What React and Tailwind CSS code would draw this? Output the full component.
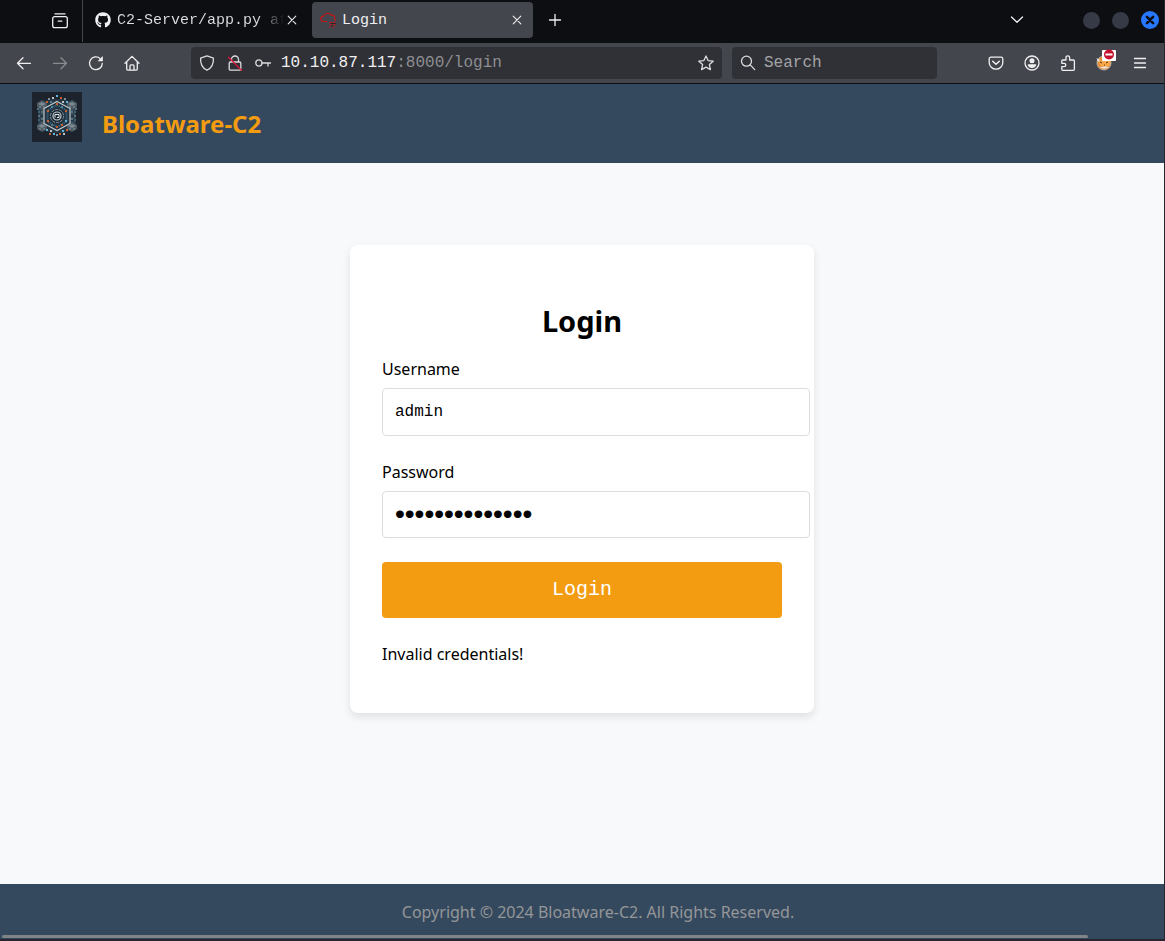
import { FaGithub } from 'react-icons/fa';

const Svg = ({ children, size = 16, className = '' }) => (
  <svg
    width={size}
    height={size}
    viewBox="0 0 16 16"
    fill="none"
    stroke="currentColor"
    strokeWidth="1.3"
    strokeLinecap="round"
    strokeLinejoin="round"
    className={className}
    aria-hidden="true"
  >
    {children}
  </svg>
);

const FirefoxViewIcon = () => (
  <Svg>
    <path d="M3 .9h10M2.600 3.600h10.800a1.900 1.900 0 0 1 1.900 1.900v7.200a1.900 1.900 0 0 1-1.900 1.900H2.600A1.900 1.900 0 0 1 .7 12.700V5.500A1.900 1.900 0 0 1 2.600 3.600zM6.200 8.200h3.600" />
  </Svg>
);

const CloudIcon = () => (
  <Svg className="text-[#c4161c]">
    <path
      d="M7 9.500H3.300A2.700 2.700 0 0 1 .8 6.800 2.600 2.600 0 0 1 3.400 4.300 4.400 4.400 0 0 1 11 3.200a3 3 0 0 1 3.800 3.300c.4.600.5 1.300.4 2"
      strokeWidth="1.200"
    />
    <path d="M9.500 10.500h2M13 10.300h2M10 12.800h1.500M13.500 12.800h2M9.500 15h1M12.500 15h1.500" strokeWidth="1" />
    <path d="M11.500 11.500h1M14 11.500h1M11.500 13.900h1" stroke="#1d1d20" strokeWidth="1" />
  </Svg>
);

const CloseIcon = () => (
  <Svg>
    <path d="M4.200 4.200l7.600 7.600M11.800 4.200l-7.600 7.600" strokeWidth="1.100" />
  </Svg>
);

const PlusIcon = () => (
  <Svg>
    <path d="M8 2.500v11M2.500 8h11" />
  </Svg>
);

const ChevronIcon = () => (
  <Svg>
    <path d="M2.500 5l5.500 5.300L13.500 5" />
  </Svg>
);

const BackIcon = () => (
  <Svg>
    <path d="M14.500 8.300H1.500M7 2.800L1.500 8.300 7 13.800" />
  </Svg>
);

const ForwardIcon = () => (
  <Svg className="text-[#8b8c90]">
    <path d="M1.500 8.300h13M9 2.800l5.500 5.500L9 13.800" />
  </Svg>
);

const ReloadIcon = () => (
  <Svg>
    <path d="M14.300 8.500a6.400 6.400 0 1 1-2.200-5.100" />
    <path d="M14.800 1v5.200H9.600z" fill="currentColor" stroke="none" />
  </Svg>
);

const HomeIcon = () => (
  <Svg>
    <path d="M1 8.300L8 1.400l7 6.900M2.700 7v7.100c0 .6.4 1 1 1h8.600c.6 0 1-.4 1-1V7M6 15v-4.200c0-.5.400-1 1-1h2c.6 0 1 .5 1 1V15" />
  </Svg>
);

const ShieldIcon = () => (
  <Svg>
    <path d="M8 .9l6.400 2.300c.3 4.900-1.100 9.500-6.400 12-5.300-2.500-6.700-7.100-6.400-12z" />
  </Svg>
);

const InsecureLockIcon = () => (
  <Svg>
    <path d="M4.500 7V4.500a3.500 3.500 0 0 1 7 0V7M3.400 7h9.200c.7 0 1.200.5 1.200 1.200v5.700c0 .7-.5 1.200-1.200 1.200H3.400c-.7 0-1.200-.5-1.200-1.200V8.200C2.200 7.500 2.700 7 3.400 7z" />
    <path d="M1.500 2.200l13.200 13.200" stroke="#e2143c" />
  </Svg>
);

const KeyIcon = () => (
  <Svg>
    <circle cx="3.900" cy="8" r="3.100" />
    <path d="M7 8h8.500M13 8v3" />
  </Svg>
);

const StarIcon = () => (
  <Svg>
    <path d="M8 1l2.100 4.600 5.100.6-3.800 3.400 1 5L8 12.100l-4.400 2.500 1-5L.8 6.200l5.100-.6z" />
  </Svg>
);

const SearchIcon = () => (
  <Svg>
    <circle cx="6.500" cy="6.200" r="5" />
    <path d="M10.200 9.900l4.500 4.700" />
  </Svg>
);

const PocketIcon = () => (
  <Svg>
    <path d="M2.900 2.200h10.200c1 0 1.700.7 1.700 1.700v3.500a6.800 6.800 0 0 1-13.600 0V3.900c0-1 .7-1.700 1.700-1.700z" />
    <path d="M4.700 6.300L8 9.300l3.300-3" strokeWidth="1.500" />
  </Svg>
);

const AccountIcon = () => (
  <Svg>
    <circle cx="8" cy="8" r="7" />
    <circle cx="8" cy="5.700" r="2.500" fill="currentColor" stroke="none" />
    <path d="M3.700 9.300h8.600c0 2.100-1.900 3.700-4.300 3.700s-4.300-1.600-4.300-3.700z" fill="currentColor" stroke="none" />
  </Svg>
);

const PuzzleIcon = () => (
  <Svg>
    <path d="M6 5V2.600a1.800 1.800 0 0 1 3.600 0V5h3.800c.6 0 1 .4 1 1v8.300c0 .5-.4 1-1 1H2.800c-.5 0-1-.5-1-1v-2.600h2.300a1.700 1.700 0 0 0 0-3.400H1.800V6c0-.6.5-1 1-1z" />
  </Svg>
);

// fox badge with the "disabled" sign over its corner
const FoxProxyIcon = () => (
  <svg width="22" height="24" viewBox="0 0 22 24" className="mb-2 ml-1" aria-hidden="true">
    <circle cx="9" cy="16" r="7" fill="#e8903a" stroke="#b9b2a8" strokeWidth="1" />
    <path d="M2 12l4 2 3-2 4 1 3 2-2 4-4 1-4-1z" fill="#f7a94b" />
    <path d="M1.500 11l3.500 2-2 2zM5 20c2 2 6 2.500 9 0l-4-.5z" fill="#e9e4dc" />
    <path d="M5 15l2 1M11 16l2-1M9 18h1" stroke="#6b3210" strokeWidth="1" />
    <rect x="7" y="3" width="14" height="11" rx="1" fill="#fff" />
    <circle cx="14" cy="7.500" r="5" fill="#c4122f" />
    <path d="M10.500 6.500h7v2h-7z" fill="#fff" />
  </svg>
);

const MenuIcon = () => (
  <Svg>
    <path d="M2.500 3.500h11M2.500 8h11M2.500 12.500h11" />
  </Svg>
);

const cubes = [[10, 12], [40, 12], [10, 34], [40, 34]];
const sparks = [
  [25, 4, '#5fb4d8'], [21, 6, '#b9c3c9'], [29, 6, '#c65f2c'], [17, 7, '#7d909a'], [33, 7, '#7d909a'],
  [15, 10, '#c65f2c'], [35, 10, '#5fb4d8'], [19, 10, '#4b83a0'], [31, 10, '#b9c3c9'], [25, 12, '#c65f2c'],
  [6, 17, '#5c7480'], [44, 17, '#5c7480'], [7, 20, '#3c6377'], [43, 20, '#3c6377'], [7, 24, '#5c7480'],
  [43, 24, '#5c7480'], [7, 28, '#3c6377'], [43, 28, '#3c6377'], [10, 20, '#5c7480'], [40, 20, '#5c7480'],
  [10, 27, '#5c7480'], [40, 27, '#5c7480'], [16, 19, '#c65f2c'], [34, 19, '#c65f2c'], [16, 29, '#c65f2c'],
  [34, 29, '#5fb4d8'], [25, 35, '#c65f2c'], [20, 15, '#4b83a0'], [30, 15, '#4b83a0'], [20, 33, '#5c7480'],
  [30, 33, '#c65f2c'], [19, 39, '#b9c3c9'], [31, 39, '#5fb4d8'], [15, 38, '#5fb4d8'], [35, 38, '#c65f2c'],
  [22, 42, '#5fb4d8'], [28, 42, '#c65f2c'], [18, 42, '#c65f2c'], [32, 42, '#b9c3c9'], [25, 43, '#7d909a'],
];

const Logo = () => (
  <svg width="50" height="50" viewBox="0 0 50 50" className="shrink-0" role="img" aria-label="Logo">
    <rect width="50" height="50" fill="#1c232c" />
    <path d="M6 11l13-4h12l13 4v26l-13 4H19L6 37z" fill="#263642" />
    <path d="M7 18h6M7 22h6M7 26h6M7 30h6M37 18h6M37 22h6M37 26h6M37 30h6" stroke="#41596a" strokeWidth="1" />
    {cubes.map(([x, y]) => (
      <g key={`${x}-${y}`}>
        <path d={`M${x - 5} ${y - 1}l5-3 5 3v4l-5 3-5-3z`} fill="#4a5963" />
        <path d={`M${x - 4} ${y}l4-2 4 2-4 2z`} fill="#7b8992" />
        <path d={`M${x - 3} ${y + 3}h2M${x + 1} ${y + 3}h2`} stroke="#8d9aa2" strokeWidth="1" />
      </g>
    ))}
    <path d="M25 9.500l13 7v15l-13 7-13-7v-15z" fill="#22323f" stroke="#c3ccd1" strokeWidth="1.200" />
    <path
      d="M25 13l9.500 5.500v11L25 35l-9.500-5.500v-11z"
      fill="none"
      stroke="#41718b"
      strokeWidth="2"
      strokeDasharray="1 1"
    />
    <circle cx="25" cy="24" r="6.500" fill="#1b2833" stroke="#8397a3" strokeWidth="1" strokeDasharray="3 1" />
    <circle cx="25" cy="24" r="4" fill="none" stroke="#c3ccd1" strokeWidth="1.200" />
    <path d="M23 25.500v-3h4v3h-2" fill="none" stroke="#dfe7eb" strokeWidth="1" />
    {sparks.map(([x, y, fill]) => (
      <rect key={`${x}-${y}`} x={x - 1} y={y - 1} width="2" height="2" fill={fill} />
    ))}
  </svg>
);

const ToolbarButton = ({ icon: Icon, label }) => (
  <button type="button" aria-label={label} className="flex h-8 w-9 shrink-0 items-center justify-center">
    <Icon />
  </button>
);

const UrlButton = ({ icon: Icon, label }) => (
  <button type="button" aria-label={label} className="flex h-8 w-7 shrink-0 items-center justify-center">
    <Icon />
  </button>
);

const TabBar = () => (
  <div className="flex h-[43px] items-start bg-[#0d0e12] text-[15px] leading-6 text-[#f0f0f2]">
    <button
      type="button"
      aria-label="Recent browsing"
      className="flex h-[42px] w-[83px] shrink-0 items-center justify-end border-r border-[#45474d] pr-3.5"
    >
      <FirefoxViewIcon />
    </button>
    <div className="flex h-10 w-[229px] shrink-0 items-center pr-3 pl-3">
      <FaGithub size={16} className="shrink-0" />
      <span className="ml-1.5 min-w-0 flex-1 bg-linear-to-r from-[#e0e0e3] from-84% to-transparent bg-clip-text pt-0.5 whitespace-nowrap text-transparent">
        C2-Server/app.py at
      </span>
      <button type="button" aria-label="Close C2-Server tab">
        <CloseIcon />
      </button>
    </div>
    <div className="mt-0.5 flex h-9 w-[221px] shrink-0 items-center rounded bg-[#44464d] px-2">
      <CloudIcon />
      <span className="ml-1.5 flex-1 pt-0.5">Login</span>
      <button type="button" aria-label="Close Login tab">
        <CloseIcon />
      </button>
    </div>
    <button type="button" aria-label="New tab" className="ml-3.5 flex h-10 items-center">
      <PlusIcon />
    </button>
    <button type="button" aria-label="List all tabs" className="ml-auto flex h-10 items-center">
      <ChevronIcon />
    </button>
    <div className="ml-[58px] flex h-10 shrink-0 items-center gap-3 pr-[5px]">
      <button type="button" aria-label="Minimize" className="size-[17px] rounded-full bg-[#363a47]" />
      <button type="button" aria-label="Maximize" className="size-[17px] rounded-full bg-[#363a47]" />
      <button
        type="button"
        aria-label="Close window"
        className="flex size-[18px] items-center justify-center rounded-full bg-[#2777ff] text-[#0d0e12]"
      >
        <Svg size={14}>
          <path d="M4.500 4.500l7 7M11.500 4.500l-7 7" strokeWidth="3" />
        </Svg>
      </button>
    </div>
  </div>
);

const Toolbar = () => (
  <div className="flex h-[41px] items-center border-b border-[#0d0e12] bg-[#44464d] px-1.5 text-[#f0f0f2]">
    <ToolbarButton icon={BackIcon} label="Back" />
    <ToolbarButton icon={ForwardIcon} label="Forward" />
    <ToolbarButton icon={ReloadIcon} label="Reload" />
    <ToolbarButton icon={HomeIcon} label="Home" />
    <div className="ml-[41px] flex h-8 min-w-0 flex-1 items-center rounded bg-[#303136] px-0.5 text-[#dcdcde]">
      <UrlButton icon={ShieldIcon} label="Tracking protection" />
      <UrlButton icon={InsecureLockIcon} label="Connection not secure" />
      <UrlButton icon={KeyIcon} label="Saved passwords" />
      <div className="ml-1 flex-1 truncate text-base leading-6 text-[#8d8e92]">
        <span className="text-[#f0f0f2]">10.10.87.117</span>:8000/login
      </div>
      <UrlButton icon={StarIcon} label="Bookmark this page" />
    </div>
    <label className="ml-2.5 flex h-8 w-[205px] items-center rounded bg-[#303136] px-2 text-[#dcdcde]">
      <SearchIcon />
      <input
        type="search"
        aria-label="Search"
        placeholder="Search"
        className="ml-2 min-w-0 flex-1 bg-transparent text-base leading-6 outline-none placeholder:text-[#a3a4a8]"
      />
    </label>
    <div className="ml-[41px] flex">
      <ToolbarButton icon={PocketIcon} label="Save to Pocket" />
      <ToolbarButton icon={AccountIcon} label="Account" />
      <ToolbarButton icon={PuzzleIcon} label="Extensions" />
      <ToolbarButton icon={FoxProxyIcon} label="FoxyProxy" />
      <ToolbarButton icon={MenuIcon} label="Menu" />
    </div>
  </div>
);

const LoginForm = () => (
  <form
    className="w-[464px] max-w-full rounded-lg bg-white px-8 pt-14 pb-[47px] shadow-[0_4px_8px_rgba(0,0,0,0.1)]"
    onSubmit={(e) => e.preventDefault()}
  >
    <h2 className="text-center text-[29px] leading-10 font-bold">Login</h2>
    <label htmlFor="username" className="mt-4 mb-[7px] block">
      Username
    </label>
    <input
      id="username"
      type="text"
      defaultValue="admin"
      className="mb-6 block h-12 w-[calc(100%+28px)] rounded border border-[#dddddd] px-3 font-['Liberation_Mono',monospace] outline-none"
    />
    <label htmlFor="password" className="mb-[7px] block">
      Password
    </label>
    <input
      id="password"
      type="password"
      defaultValue="bloatwareadmin"
      className="mb-6 block h-[47px] w-[calc(100%+28px)] rounded border border-[#dddddd] px-3 font-['Liberation_Serif',serif] text-[28px] outline-none [-webkit-text-stroke:1px_black]"
    />
    <button
      type="submit"
      className="h-14 w-full rounded bg-[#f39c12] font-['Liberation_Mono',monospace] text-xl text-white"
    >
      Login
    </button>
    <p className="mt-6">Invalid credentials!</p>
  </form>
);

export default function App() {
  return (
    <div className="flex min-h-screen flex-col overflow-hidden border-r border-b-2 border-[#262530] bg-[#f8f9fb] font-['Noto_Sans',sans-serif] text-base leading-6 text-black">
      <div className="font-['Liberation_Mono',monospace]">
        <TabBar />
        <Toolbar />
      </div>
      <header className="flex h-[79px] items-center bg-[#34495e] px-8">
        <div className="mt-2 self-start">
          <Logo />
        </div>
        <h1 className="ml-5 text-2xl font-bold text-[#f39c12]">Bloatware-C2</h1>
      </header>
      <main className="flex flex-1 items-start justify-center px-4 pt-[82px] pb-8">
        <LoginForm />
      </main>
      <footer className="bg-[#34495e] pt-4 text-center text-[#949698]">
        <p className="pl-8">Copyright © 2024 Bloatware-C2. All Rights Reserved.</p>
        <div className="mt-[11px] mr-[76px] mb-px ml-0.5 h-[3px] rounded-full bg-[#808487]" />
      </footer>
    </div>
  );
}
